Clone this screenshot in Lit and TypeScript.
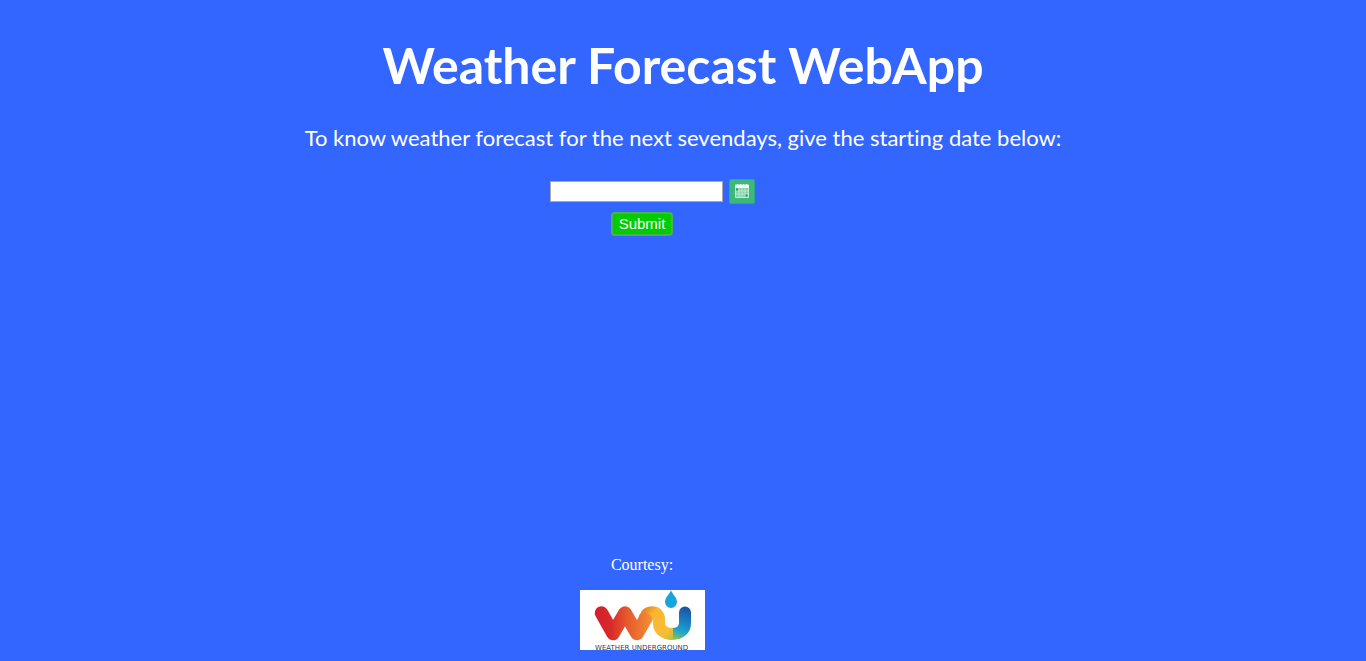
import { LitElement, html, css } from "lit";
import { customElement } from "lit/decorators.js";

@customElement("wu-logo")
export class WuLogo extends LitElement {
  static styles = css`
    :host {
      display: block;
      line-height: 0;
    }
    .brand {
      fill: #3c3c42;
      font: 7px "DejaVu Sans", sans-serif;
    }
  `;

  render() {
    return html`
      <svg width="125" height="60" viewBox="0 0 125 60" role="img" aria-label="Weather Underground">
        <defs>
          <linearGradient id="warm" gradientUnits="userSpaceOnUse" x1="18" y1="0" x2="76" y2="0">
            <stop offset="0" stop-color="#d5202c" />
            <stop offset="0.22" stop-color="#d92a2a" />
            <stop offset="0.5" stop-color="#e5592d" />
            <stop offset="1" stop-color="#f49a35" />
          </linearGradient>
          <linearGradient id="sun" gradientUnits="userSpaceOnUse" x1="62" y1="20" x2="96" y2="48">
            <stop offset="0" stop-color="#dd7f22" />
            <stop offset="0.25" stop-color="#fbb531" />
            <stop offset="0.75" stop-color="#f9bd35" />
            <stop offset="1" stop-color="#a4c53c" />
          </linearGradient>
          <linearGradient id="cool" gradientUnits="userSpaceOnUse" x1="105" y1="18" x2="94" y2="50">
            <stop offset="0" stop-color="#1c56a6" />
            <stop offset="0.45" stop-color="#1787c8" />
            <stop offset="0.7" stop-color="#20a5cf" />
            <stop offset="1" stop-color="#9cc540" />
          </linearGradient>
        </defs>
        <rect width="125" height="60" fill="#fff" />
        <g fill="none" stroke-width="12" stroke-linejoin="round" stroke-linecap="round">
          <path stroke="url(#cool)" d="M92 44C101 44 105 39 105 33V22.500" />
          <path stroke="url(#sun)" stroke-linecap="butt" d="M64 29C67 23 70 22.500 73 22.500C77 22.500 79 26 79 30V33C79 40 84 44 93 44" />
          <path stroke="url(#warm)" stroke-width="13.500" d="M21.500 23L33 43.500L45 23L57 43.500L66 28" />
        </g>
        <path fill="url(#sun)" d="M61 22C65 16 74 15 80 19C84 22 85 26 85 30L73 33C73 27 70 22 61 22Z" />
        <path fill="#18a5dc" d="M91 0C92 4 97 7 97 12A6 6 0 0 1 85 12C85 7 90 4 91 0Z" />
        <text class="brand" x="15" y="60">WEATHER UNDERGROUND</text>
      </svg>
    `;
  }
}

@customElement("app-root")
export class AppRoot extends LitElement {
  static styles = css`
    :host {
      display: block;
      box-sizing: border-box;
      min-height: 100vh;
      background: #3366ff;
      color: #fff;
    }
    .intro {
      padding: 32px 8px 0;
      text-align: center;
      font-family: "Comic Sans MS", Lato, sans-serif;
      font-variant-ligatures: none;
    }
    .title {
      margin: 0;
      font-size: 50px;
      line-height: 66px;
      font-weight: 700;
    }
    .lead {
      margin: 24px 0 0;
      font-size: 22px;
      line-height: 32px;
    }
    .column {
      display: flex;
      flex-direction: column;
      align-items: center;
      padding-right: 82px;
    }
    .form {
      padding-top: 25px;
    }
    .field {
      display: flex;
      align-items: center;
      gap: 6px;
      padding-left: 21px;
    }
    .date {
      box-sizing: border-box;
      width: 173px;
      height: 21px;
      padding: 1px;
      border: 1px solid #a9a9a9;
      background: #fff;
      font: 13px "Liberation Sans", Arial, sans-serif;
    }
    .picker {
      width: 26px;
      height: 25px;
      padding: 0;
      border: 1px solid #35a587;
      border-radius: 2px;
      background: #3cb878;
      line-height: 0;
    }
    .submit {
      box-sizing: border-box;
      height: 24px;
      margin-top: 8px;
      padding: 0 6px;
      border: 2px solid #4caf50;
      border-radius: 4px;
      background: #00cc00;
      color: #fff;
      font: 15px/20px "Liberation Sans", Arial, sans-serif;
    }
    .courtesy {
      padding-top: 320px;
    }
    .note {
      margin: 0 0 16px;
      font: 16px/18px "Liberation Serif", "Times New Roman", serif;
    }
  `;

  private submit(event: Event) {
    event.preventDefault();
  }

  render() {
    return html`
      <header class="intro">
        <h1 class="title">Weather Forecast WebApp</h1>
        <p class="lead">
          <label for="date">To know weather forecast for the next sevendays, give the starting date below:</label>
        </p>
      </header>
      <form class="column form" @submit=${this.submit}>
        <div class="field">
          <input class="date" id="date" type="text" />
          <button class="picker" type="button" aria-label="Choose date">
            <svg width="24" height="23" viewBox="0 0 24 23">
              <path fill="#f2fbf6" d="M5 6Q5 4 6 4.500H7V4H8V4.500H10V4H11V4.500H13V4H14V4.500H16V4H17V4.500H18Q19 4 19 6V8H5Z" />
              <path fill="#82d2aa" stroke="#c4ead7" d="M5.500 8V17.500H18.500V8" />
              <path fill="none" stroke="#c4ead7" stroke-width=".8" d="M6 11H18M6 14H18M9 8V17M12 8V17M15 8V17" />
              <path fill="#279a68" d="M6 8.500H8V10.500H6ZM15.500 14.500H17.500V16.500H15.500Z" />
            </svg>
          </button>
        </div>
        <button class="submit" type="submit">Submit</button>
      </form>
      <footer class="column courtesy">
        <p class="note">Courtesy:</p>
        <wu-logo></wu-logo>
      </footer>
    `;
  }
}
